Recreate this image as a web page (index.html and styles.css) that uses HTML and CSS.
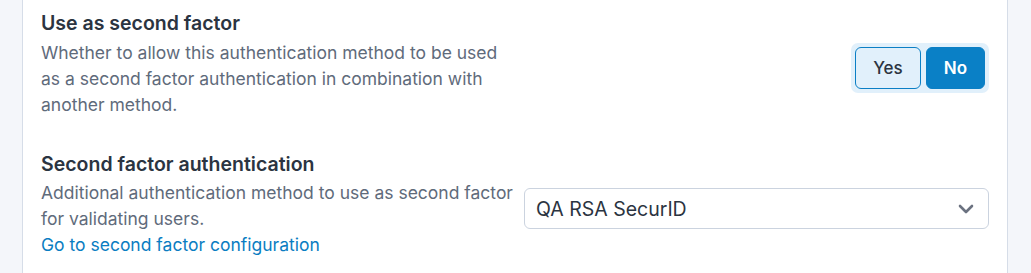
FILE: index.html
```html
<!DOCTYPE html>
<html lang="en">
<head>
    <meta charset="UTF-8">
    <title>Authentication method</title>
    <link rel="stylesheet" href="styles.css">
</head>
<body>
<div class="page">
    <div class="panel">
        <div class="row">
            <div class="label">
                <div class="title">Use as second factor</div>
                <div class="desc">Whether to allow this authentication method to be used as a second factor authentication in combination with another method.</div>
            </div>
            <div class="control control-right">
                <div class="toggle">
                    <button class="opt">Yes</button>
                    <button class="opt active">No</button>
                </div>
            </div>
        </div>

        <div class="row">
            <div class="label">
                <div class="title">Second factor authentication</div>
                <div class="desc">Additional authentication method to use as second factor for validating users.</div>
                <a class="link" href="#">Go to second factor configuration</a>
            </div>
            <div class="control">
                <div class="select">
                    <span>QA RSA SecurID</span>
                    <svg width="16" height="10" viewBox="0 0 16 10">
                        <path d="M2 2l6 6 6-6" fill="none" stroke="#6b7280" stroke-width="2.6" stroke-linecap="round" stroke-linejoin="round"/>
                    </svg>
                </div>
            </div>
        </div>
    </div>
</div>
</body>
</html>
```

FILE: styles.css
```css
* {
    box-sizing: border-box;
}

body {
    margin: 0;
    background-color: #f4f6fa;
    font-family: Inter, "Liberation Sans", sans-serif;
}

.page {
    padding: 0 23px 0 22px;
}

.panel {
    background-color: #fff;
    border-left: 1px solid #d6dde8;
    border-right: 1px solid #d6dde8;
    padding: 11px 18px 20px;
    min-height: 273px;
}

.row {
    display: grid;
    grid-template-columns: 474px 1fr;
    column-gap: 9px;
    align-items: center;
}

.row + .row {
    margin-top: 34px;
}

.title {
    font-size: 19.5px;
    font-weight: 600;
    line-height: 25px;
    color: #2b3441;
}

.desc {
    margin-top: 3.5px;
    font-size: 17.5px;
    line-height: 26px;
    color: #5f6b7b;
}

.link {
    display: block;
    font-size: 17.5px;
    line-height: 26px;
    color: #0a7dc2;
    text-decoration: none;
}

.control {
    padding-top: 8px;
}

.control-right {
    display: flex;
    justify-content: flex-end;
}

.toggle {
    display: flex;
    gap: 5px;
    padding: 4px;
    background-color: #e1f0fb;
    border-radius: 7px;
}

.opt {
    height: 42px;
    padding: 0 17px;
    border: 1px solid #0b7fc5;
    border-radius: 6px;
    background-color: #e1f0fb;
    color: #2b3441;
    font-family: inherit;
    font-size: 17px;
    font-weight: 500;
}

.opt.active {
    background-color: #0a80c6;
    color: #fff;
    font-weight: 600;
}

.select {
    height: 41px;
    display: flex;
    align-items: center;
    justify-content: space-between;
    padding: 0 14px 0 11px;
    border: 1px solid #cbd3df;
    border-radius: 6px;
    font-size: 19.5px;
    color: #2b3441;
}
```
